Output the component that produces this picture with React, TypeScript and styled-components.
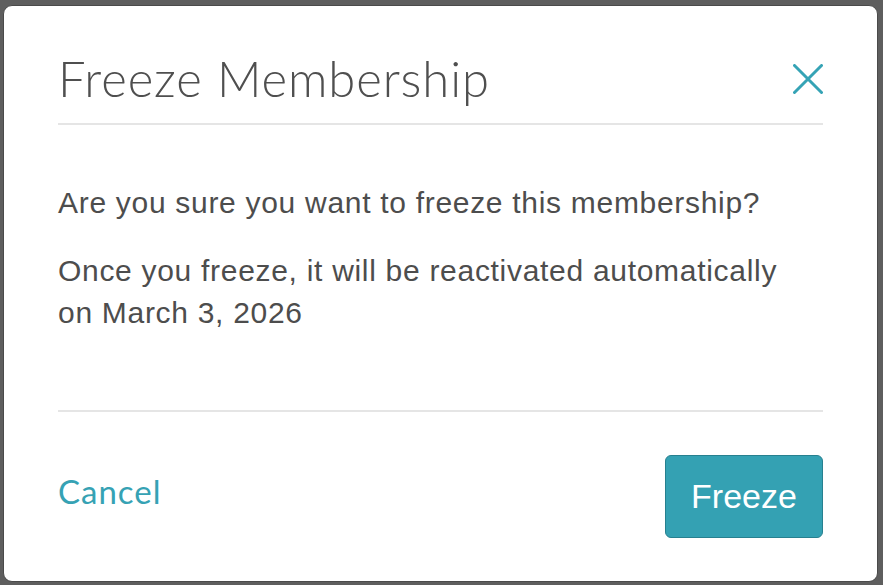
import React from "react";
import styled, { createGlobalStyle } from "styled-components";

const Global = createGlobalStyle`
  html, body { margin: 0; padding: 0; }
  body { background: #5e5e5e; width: 883px; height: 585px; overflow: hidden; }
`;

const Page = styled.div`
  width: 883px;
  height: 585px;
  padding: 5px 5px 3px 3px;
  box-sizing: border-box;
`;

const Dialog = styled.div`
  width: 875px;
  height: 577px;
  box-sizing: border-box;
  background: #ffffff;
  border: 1px solid #4a4a4a;
  border-radius: 9px;
  padding: 0 54px;
  display: flex;
  flex-direction: column;
`;

const Header = styled.div`
  display: flex;
  align-items: center;
  justify-content: space-between;
  padding: 44px 0 16px;
  border-bottom: 2px solid #e5e5e5;
`;

const Title = styled.h1`
  margin: 0;
  font-family: Lato, "Open Sans", sans-serif;
  font-weight: 300;
  font-size: 49px;
  line-height: 57px;
  color: #4f4f4f;
  letter-spacing: 0.9px;
`;

const CloseButton = styled.button`
  border: 0;
  background: none;
  padding: 0;
  width: 30px;
  height: 30px;
  display: flex;
  align-items: center;
  justify-content: center;
  cursor: pointer;
`;

const Body = styled.div`
  padding: 57px 0 76px;
  border-bottom: 2px solid #e5e5e5;
`;

const Paragraph = styled.p<{ $gap?: number }>`
  margin: 0 0 ${(p) => p.$gap ?? 0}px;
  font-family: "Liberation Sans", Arial, sans-serif;
  font-size: 30px;
  line-height: 42px;
  letter-spacing: 0.7px;
  color: #4d4d4d;
`;

const Footer = styled.div`
  display: flex;
  align-items: center;
  justify-content: space-between;
  padding-top: 43px;
`;

const CancelLink = styled.a`
  font-family: Lato, "Open Sans", sans-serif;
  font-weight: 400;
  font-size: 33px;
  letter-spacing: 1px;
  color: #36a2b4;
  margin-bottom: 12px;
  cursor: pointer;
`;

const PrimaryButton = styled.button`
  width: 158px;
  height: 83px;
  box-sizing: border-box;
  background: #34a1b3;
  border: 1.5px solid #27808f;
  border-radius: 6px;
  color: #ffffff;
  font-family: "Liberation Sans", Arial, sans-serif;
  font-size: 34px;
  padding: 0;
  cursor: pointer;
`;

export default function App() {
  return (
    <>
      <Global />
      <Page>
        <Dialog>
          <Header>
            <Title>Freeze Membership</Title>
            <CloseButton aria-label="Close">
              <svg width="30" height="30" viewBox="0 0 30 30">
                <path
                  d="M1.5 1.5 L28.5 28.5 M28.5 1.5 L1.5 28.5"
                  stroke="#35a3b5"
                  strokeWidth="3"
                  strokeLinecap="round"
                />
              </svg>
            </CloseButton>
          </Header>
          <Body>
            <Paragraph $gap={26}>Are you sure you want to freeze this membership?</Paragraph>
            <Paragraph>
              Once you freeze, it will be reactivated automatically
              <br />
              on March 3, 2026
            </Paragraph>
          </Body>
          <Footer>
            <CancelLink>Cancel</CancelLink>
            <PrimaryButton>Freeze</PrimaryButton>
          </Footer>
        </Dialog>
      </Page>
    </>
  );
}
